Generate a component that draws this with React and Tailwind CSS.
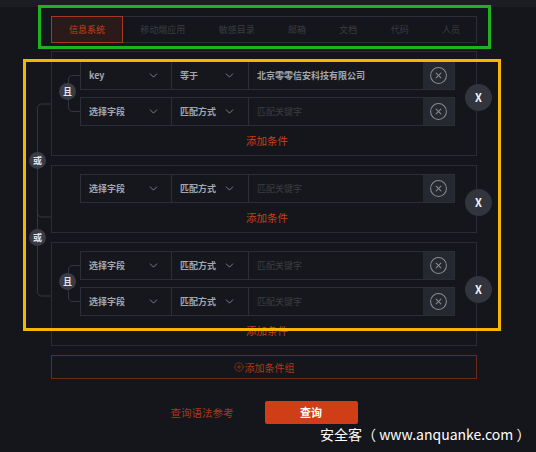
import React from "react";
import { ChevronDown, CircleX, CirclePlus } from "lucide-react";

const tabs = ["信息系统", "移动端应用", "敏感目录", "邮箱", "文档", "代码", "人员"];

const emptyRow = { field: "选择字段", op: "匹配方式", value: "" };

const groups = [
  {
    pad: "pt-[9px]",
    xTop: "top-[32px]",
    rows: [{ field: "key", op: "等于", value: "北京零零信安科技有限公司" }, emptyRow],
  },
  { pad: "pt-2", xTop: "top-[23px]", rows: [emptyRow] },
  { pad: "pt-[8px]", xTop: "top-[33px]", rows: [emptyRow, emptyRow] },
];

const Badge = ({ label, className }) => (
  <div
    className={
      "absolute w-[17px] h-[17px] rounded-full bg-[#393b46] text-[#e4e4e8] text-[9px] font-bold flex items-center justify-center " +
      className
    }
  >
    {label}
  </div>
);

const ConditionRow = ({ row }) => (
  <div className="flex h-[29px] border border-[#2c2e36] bg-[#16171c]">
    <div className="w-[91px] flex items-center justify-between pl-[8px] pr-[11px] border-r border-[#2c2e36] text-[9px] font-bold text-[#a3a6ae]">
      <span>{row.field}</span>
      <ChevronDown size={13} strokeWidth={1.4} className="text-[#9a9da6]" />
    </div>
    <div className="w-[77px] flex items-center justify-between pl-[8px] pr-[12px] border-r border-[#2c2e36] text-[9px] font-bold text-[#a3a6ae]">
      <span>{row.op}</span>
      <ChevronDown size={13} strokeWidth={1.4} className="text-[#9a9da6]" />
    </div>
    <div className="flex-1 flex items-center pl-[8px] text-[9px]">
      {row.value ? (
        <span className="font-bold text-[#a3a6ae]">{row.value}</span>
      ) : (
        <span className="text-[#3a3c45]">匹配关键字</span>
      )}
    </div>
    <div className="w-[31px] flex items-center justify-center bg-[#262830]">
      <CircleX size={19} strokeWidth={1.3} className="text-[#878a93]" />
    </div>
  </div>
);

const Group = ({ group }) => (
  <div className={"relative border border-[#2a2c33] pb-[6px] " + group.pad}>
    <div className="relative ml-[28px] w-[375px] flex flex-col gap-[7px]">
      {group.rows.length > 1 && (
        <>
          <svg className="absolute left-[-13px] top-0" width="13" height="66" fill="none">
            <path
              d="M13 14.5 H6 Q1.5 14.5 1.5 19 V46 Q1.5 50.5 6 50.5 H13"
              stroke="#34363e"
              strokeWidth="1"
            />
          </svg>
          <Badge label="且" className="left-[-21px] top-[22px]" />
        </>
      )}
      {group.rows.map((row, i) => (
        <ConditionRow key={i} row={row} />
      ))}
    </div>
    <div className="mt-[7px] leading-[16px] text-center pl-[28px] pr-[22px] text-[10.5px] text-[#c5411c]">
      添加条件
    </div>
    <div
      className={
        "absolute right-[-16px] w-[27px] h-[27px] rounded-full bg-[#32343e] flex items-center justify-center text-[11px] font-bold text-[#f2f2f4] " +
        group.xTop
      }
    >
      X
    </div>
  </div>
);

export default function App() {
  return (
    <div className="relative w-[536px] h-[452px] overflow-hidden bg-[#15161b] font-['Noto_Sans_CJK_SC','Liberation_Sans',sans-serif]">
      <div className="h-[7px] bg-[#1b1d23]" />

      <div className="ml-[51px] w-[426px]">
        {/* tabs */}
        <div className="mt-[9px] h-[27px] flex justify-between border border-[#2c2e36]">
          {tabs.map((t, i) => (
            <div
              key={t}
              className={
                i === 0
                  ? "shrink-0 whitespace-nowrap px-[17px] -my-px -ml-px flex items-center border border-[#a8391e] bg-[#2a1b1a] text-[9px] text-[#c7411c]"
                  : "shrink-0 whitespace-nowrap px-[16px] flex items-center text-[9px] text-[#3a3c44]"
              }
            >
              {t}
            </div>
          ))}
        </div>

        {/* condition groups */}
        <div className="relative mt-[8px] flex flex-col gap-[9px]">
          <svg className="absolute left-[-16px] top-0" width="16" height="252" fill="none">
            <path
              d="M16 53 H7 Q2.5 53 2.5 57.5 V240.5 Q2.5 245 7 245 H16"
              stroke="#34363e"
              strokeWidth="1"
            />
            <path d="M2.5 161.5 Q2.5 166 7 166 H16" stroke="#34363e" strokeWidth="1" />
          </svg>
          <Badge label="或" className="left-[-22px] top-[101px]" />
          <Badge label="或" className="left-[-22px] top-[178px]" />
          {groups.map((g, i) => (
            <Group key={i} group={g} />
          ))}
        </div>

        <div className="mt-[9px] h-[24px] border border-[#6e2818] flex items-center justify-center gap-[1px] text-[10px] text-[#a9391d]">
          <CirclePlus size={10} strokeWidth={1.6} />
          <span>添加条件组</span>
        </div>

        <div className="mt-[22px] flex items-center justify-center gap-[31px]">
          <span className="text-[10.5px] text-[#a9391d]">查询语法参考</span>
          <div className="w-[93px] h-[23px] rounded-[2px] bg-[#d03e17] flex items-center justify-center text-[11px] font-bold text-white">
            查询
          </div>
        </div>
      </div>

      {/* annotation frames */}
      <div className="absolute left-[38px] top-[5px] w-[453px] h-[44px] border-[3px] border-[#1fb21f]" />
      <div className="absolute left-[23px] top-[59px] w-[478px] h-[272px] border-[3px] border-[#f6b600]" />

      <div className="absolute left-[320px] top-[424px] text-[14px] leading-[20px] text-white whitespace-nowrap">
        安全客（ www.anquanke.com ）
      </div>
    </div>
  );
}
